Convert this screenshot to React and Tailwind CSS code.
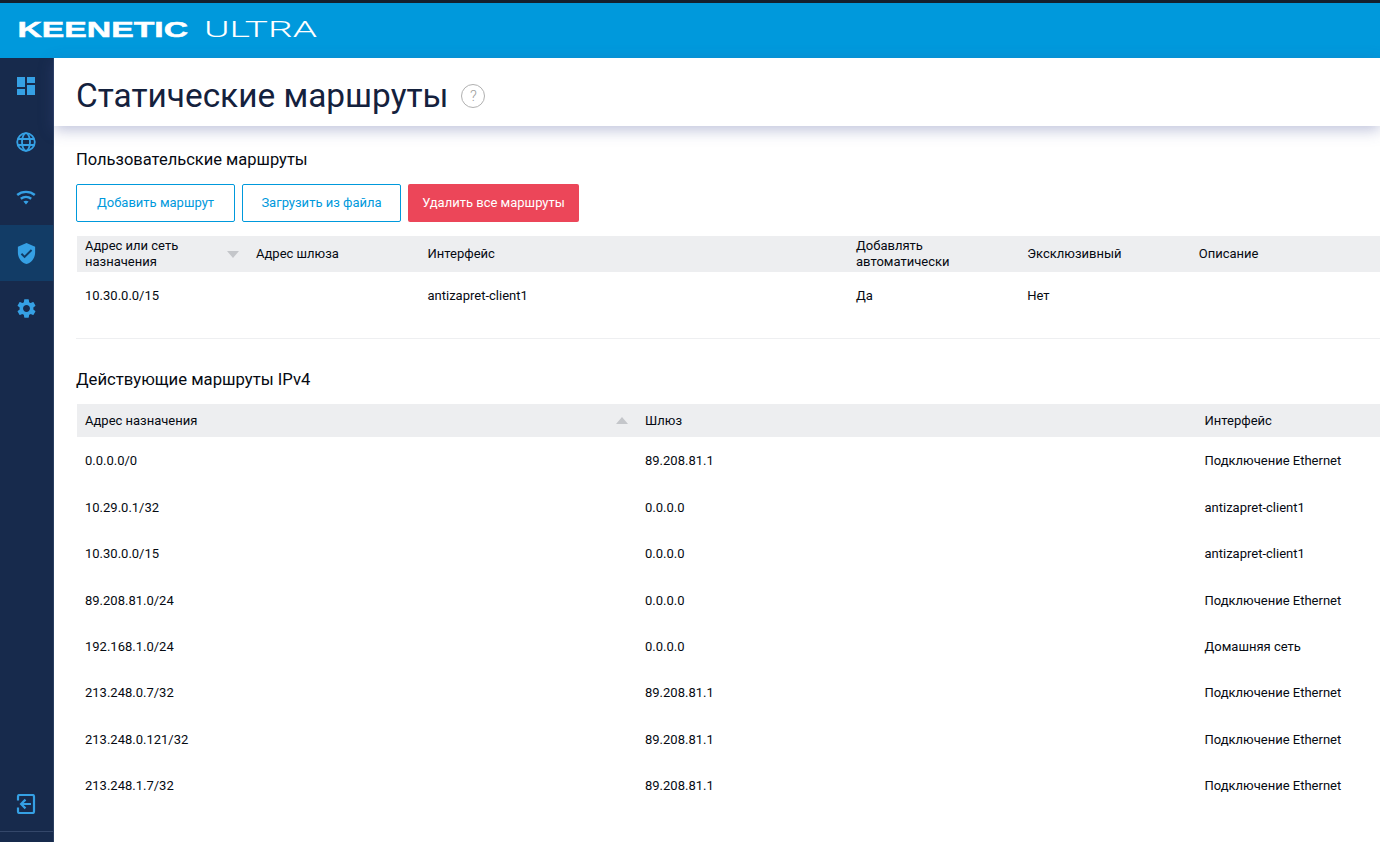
import React from "react";
import { MdDashboard, MdVerifiedUser, MdSettings } from "react-icons/md";

const font = { fontFamily: "Roboto, 'Liberation Sans', sans-serif" };

function Logo() {
  return (
    <svg width="320" height="26" viewBox="0 0 320 26" className="block ml-[17px] -mt-[3px]">
      <text x="0.500" y="20.500" fontFamily="'Liberation Sans', sans-serif" fontWeight="700" fontSize="22.500" fill="#fff" stroke="#fff" strokeWidth="0.5" textLength="170.500" lengthAdjust="spacingAndGlyphs">KEENETIC</text>
      <text x="187" y="20.500" fontFamily="Roboto, sans-serif" fontWeight="300" fontSize="22.500" fill="#fff" textLength="113" lengthAdjust="spacingAndGlyphs">ULTRA</text>
    </svg>
  );
}

function Globe() {
  return (
    <svg width="20" height="20" viewBox="0 0 20 20" fill="none" stroke="#35a0e4" strokeWidth="1.8">
      <circle cx="10" cy="10" r="8.800" />
      <ellipse cx="10" cy="10" rx="4" ry="8.800" />
      <path d="M1.800 7h16.400M1.800 13h16.400" />
    </svg>
  );
}

function Wifi() {
  return (
    <svg width="20" height="15" viewBox="0 0 20 15" fill="none" stroke="#35a0e4" strokeWidth="2.400">
      <path d="M1.200 5C6 .8 14 .8 18.800 5" />
      <path d="M4.800 8.800c3-2.400 7.400-2.400 10.400 0" />
      <path d="M7.400 11.600l2.600 3 2.600-3c-1.500-1-3.700-1-5.200 0z" fill="#35a0e4" stroke="none" />
    </svg>
  );
}

function Logout() {
  return (
    <svg width="20" height="20" viewBox="0 0 20 20" fill="none" stroke="#35a0e4" strokeWidth="2.200">
      <path d="M5.500 10H15M9.500 5.600L5.100 10l4.400 4.400" />
      <path d="M2 6.500V2.500A1.500 1.500 0 0 1 3.500 1h13A1.500 1.500 0 0 1 18 2.500v15a1.500 1.500 0 0 1-1.500 1.500h-13A1.500 1.500 0 0 1 2 17.500v-4" />
    </svg>
  );
}

function NavItem({ children, active, h }) {
  return (
    <div className={"flex items-center justify-center pr-[1px] " + h + " " + (active ? "bg-[#123c66]" : "")}>{children}</div>
  );
}

function Sort({ up }) {
  return (
    <span className={"w-0 h-0 border-x-[6px] border-x-transparent " + (up ? "border-b-[7px] border-b-[#c4c6ca]" : "border-t-[7px] border-t-[#c4c6ca]")} />
  );
}

const rows = [
  ["0.0.0.0/0", "89.208.81.1", "Подключение Ethernet"],
  ["10.29.0.1/32", "0.0.0.0", "antizapret-client1"],
  ["10.30.0.0/15", "0.0.0.0", "antizapret-client1"],
  ["89.208.81.0/24", "0.0.0.0", "Подключение Ethernet"],
  ["192.168.1.0/24", "0.0.0.0", "Домашняя сеть"],
  ["213.248.0.7/32", "89.208.81.1", "Подключение Ethernet"],
  ["213.248.0.121/32", "89.208.81.1", "Подключение Ethernet"],
  ["213.248.1.7/32", "89.208.81.1", "Подключение Ethernet"],
];

export default function App() {
  return (
    <div style={font} className="w-[1380px] h-[842px] overflow-hidden flex flex-col bg-white text-[13px] text-[#060a12]">
      <header className="h-[58px] shrink-0 bg-[#0099dc] border-t-[3px] border-[#14202e] flex items-center">
        <Logo />
      </header>
      <div className="flex-1 flex min-h-0">
        <aside className="w-[54px] shrink-0 bg-[#172a4c] border-r border-[#2b3f60] flex flex-col">
          <NavItem h="h-[56px]"><MdDashboard size={24} color="#35a0e4" /></NavItem>
          <NavItem h="h-[56px]"><Globe /></NavItem>
          <NavItem h="h-[55px]"><Wifi /></NavItem>
          <NavItem h="h-[56px]" active><MdVerifiedUser size={23} color="#35a0e4" /></NavItem>
          <NavItem h="h-[55px]"><MdSettings size={23} color="#35a0e4" /></NavItem>
          <div className="mt-auto">
            <div className="h-[55px] flex items-center justify-center pr-[1px]"><Logout /></div>
            <div className="h-px bg-[#34476a] mb-[10px]" />
          </div>
        </aside>
        <main className="flex-1 min-w-0">
          <div className="h-[68px] pl-[22px] pt-[8px] flex items-center gap-[13px] bg-white shadow-[0_4px_14px_rgba(70,80,150,0.35)]">
            <h1 className="text-[33.4px] leading-[40px] font-normal text-[#14213d]">Статические маршруты</h1>
            <span className="w-[24px] h-[24px] rounded-full border border-[#b0b0b0] flex items-center justify-center text-[15px] font-light text-[#a0a0a0]">?</span>
          </div>

          <section className="pl-[22px] pt-[24px]">
            <h2 className="text-[16.5px] leading-[20px] font-normal text-[#060a12]">Пользовательские маршруты</h2>
            <div className="flex gap-[7px] mt-[14px]">
              <button className="w-[159px] h-[38px] border border-[#0099dc] rounded-[2px] text-[#0099dc]">Добавить маршрут</button>
              <button className="w-[159px] h-[38px] border border-[#0099dc] rounded-[2px] text-[#0099dc]">Загрузить из файла</button>
              <button className="w-[171px] h-[38px] bg-[#ec4659] rounded-[2px] text-white">Удалить все маршруты</button>
            </div>
            <div className="mt-[14px] ml-[1px] grid grid-cols-[171px_171.500px_428.500px_171.250px_171.500px_1fr]">
              <div className="h-[36px] bg-[#edeef0] pl-[8px] pr-[9px] flex items-center justify-between leading-[16px]">
                <span>Адрес или сеть<br />назначения</span>
                <Sort />
              </div>
              <div className="h-[36px] bg-[#edeef0] pl-[8px] flex items-center">Адрес шлюза</div>
              <div className="h-[36px] bg-[#edeef0] pl-[8px] flex items-center">Интерфейс</div>
              <div className="h-[36px] bg-[#edeef0] pl-[8px] flex items-center leading-[16px]"><span>Добавлять<br />автоматически</span></div>
              <div className="h-[36px] bg-[#edeef0] pl-[8px] flex items-center">Эксклюзивный</div>
              <div className="h-[36px] bg-[#edeef0] pl-[8px] flex items-center">Описание</div>
              <div className="h-[48px] pl-[8px] flex items-center">10.30.0.0/15</div>
              <div className="h-[48px] pl-[8px]" />
              <div className="h-[48px] pl-[8px] flex items-center">antizapret-client1</div>
              <div className="h-[48px] pl-[8px] flex items-center">Да</div>
              <div className="h-[48px] pl-[8px] flex items-center">Нет</div>
              <div className="h-[48px]" />
            </div>
            <div className="mt-[18px] h-px bg-[#eeeff1]" />
            <h2 className="mt-[31px] text-[16.7px] leading-[20px] font-normal text-[#060a12]">Действующие маршруты IPv4</h2>
            <div className="mt-[14px] ml-[1px] grid grid-cols-[560px_559.500px_1fr]">
              <div className="h-[33px] bg-[#edeef0] pl-[8px] pr-[9px] flex items-center justify-between">
                <span>Адрес назначения</span>
                <Sort up />
              </div>
              <div className="h-[33px] bg-[#edeef0] pl-[8px] flex items-center">Шлюз</div>
              <div className="h-[33px] bg-[#edeef0] pl-[8px] flex items-center">Интерфейс</div>
              {rows.map((r) => (
                <React.Fragment key={r[0]}>
                  <div className="h-[46.400px] pl-[8px] pt-[2px] flex items-center">{r[0]}</div>
                  <div className="h-[46.400px] pl-[8px] pt-[2px] flex items-center">{r[1]}</div>
                  <div className="h-[46.400px] pl-[8px] pt-[2px] flex items-center">{r[2]}</div>
                </React.Fragment>
              ))}
            </div>
          </section>
        </main>
      </div>
    </div>
  );
}
